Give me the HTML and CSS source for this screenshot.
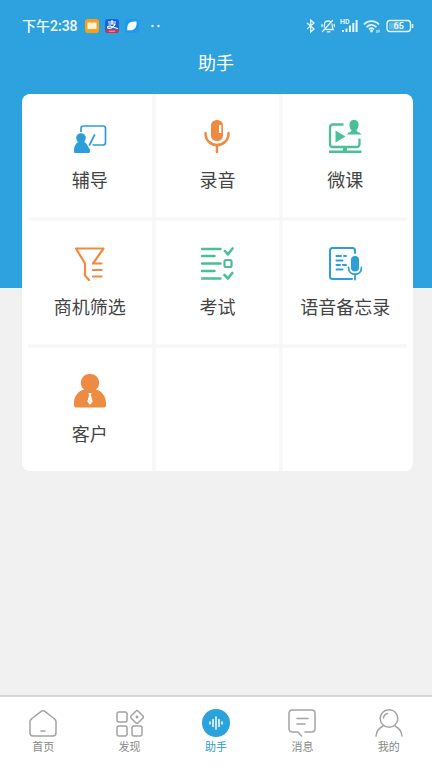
FILE: index.html
```html
<!DOCTYPE html>
<html lang="zh-CN">
<head>
<meta charset="utf-8">
<meta name="viewport" content="width=device-width, initial-scale=1">
<title>助手</title>
<link rel="stylesheet" href="styles.css">
</head>
<body>
<div class="status">
  <time class="clock">下午2:38</time>
  <div class="notices">
    <svg width="14" height="14" viewBox="0 0 14 14"><rect width="14" height="14" rx="3" fill="#f7a01c"/><path d="M2.500 3.500h3.500l1 .6 1-.6h3.500v6.500h-9z" fill="#fff3dc"/></svg>
    <svg width="14" height="14" viewBox="0 0 14 14"><rect width="14" height="14" rx="3" fill="#1765d8"/><path d="M0 10.500h14v.5a3 3 0 0 1-3 3H3a3 3 0 0 1-3-3z" fill="#d9304c"/><path d="M3 3h8M7 1v4M3.500 5h6.500C9 8 6 10 3.500 9.300 1.500 8.500 3 6.500 5.500 7.200L13 9.800" fill="none" stroke="#fff" stroke-width="1.200"/><path d="M4 12.200h6" stroke="#f3a6b2"/></svg>
    <svg width="14" height="14" viewBox="0 0 14 14"><rect width="14" height="14" rx="3" fill="#1b9bf0"/><path d="M3 5.500C4 3 7 2 11.500 2.500c.5 4-1 7.500-4 8.500-2 .6-3.500 0-5 .5C2 9.500 2.200 7.500 3 5.500z" fill="#fff"/></svg>
    <svg class="more" width="10" height="14" viewBox="0 0 10 14" fill="#e9f6fd"><circle cx="1.500" cy="7" r="1.200"/><circle cx="7.500" cy="7" r="1.200"/></svg>
  </div>
  <div class="signals">
    <svg width="10" height="14" viewBox="0 0 10 14" fill="none" stroke="#e6f5fc" stroke-width="1.300"><path d="M1 4l7 6-3.300 3V1L8 4l-7 6"/></svg>
    <svg width="14" height="14" viewBox="0 0 14 14" fill="none" stroke="#e6f5fc" stroke-width="1.300" stroke-linecap="round"><path d="M3.300 8c.3-3-.3-6 3.700-6 1 0 1.700.2 2.200.6M11 5c.3 2.500.2 4 1.200 5.500H5M6.500 12.800h2.500M1.500 12.500l10-11M1 5.500v2M13.300 5.500v2"/></svg>
    <svg class="cell-signal" width="18" height="14" viewBox="0 0 18 14" fill="#e6f5fc"><path d="M2 11h2v2H2zM5.500 9.500h2V13h-2zM9 6.500h2V13H9zM12.300 4h2v9h-2zM15.600 1h2v12h-2z"/><text x="0" y="5">HD</text></svg>
    <svg width="18" height="14" viewBox="0 0 18 14" fill="none" stroke="#e6f5fc" stroke-width="1.700"><path d="M1 5.500c4-4.600 11-4.600 15 0M3.600 8.100c3-3 7-3 9.800 0M6 10.400c1.600-1.500 3.400-1.500 5 0"/><circle cx="8.500" cy="12" r=".6"/><path d="M14 11v3M16 10.500v3" stroke-width="1"/></svg>
    <svg class="battery" width="28" height="14" viewBox="0 0 28 14"><rect x="1" y="1.500" width="23.500" height="11" rx="3" fill="none" stroke="#e6f5fc" stroke-width="1.400"/><rect x="3" y="3.500" width="12" height="7" rx="1" fill="#5db7e7"/><path d="M26.500 5v4" stroke="#e6f5fc" stroke-width="1.500"/><text x="12.700" y="10.300" text-anchor="middle">65</text></svg>
  </div>
</div>
<header class="title-bar"><h1>助手</h1></header>
<main>
  <div class="card">
    <div class="grid">
      <a class="tile" href="#">
        <svg class="icon blue" viewBox="0 0 34 34"><path d="M8 12V8.500Q8 6 10.500 6H30q2.500 0 2.500 2.500v14Q32.500 25 30 25H19.500" fill="none" stroke="currentColor" stroke-width="1.700"/><path d="M21.500 15l-5 10" stroke="currentColor" stroke-width="1.700" stroke-linecap="round"/><circle cx="8" cy="18" r="4.800" fill="currentColor"/><path d="M1 32v-2c0-4 2.500-7.500 5-8.500h4c2 .5 3.500 2 4.500 4l1.500 2.500c1 1 1.200 3 1 4q-.5 1-1.500 1H2q-1 0-1-1z" fill="currentColor"/></svg>
        <span>辅导</span>
      </a>
      <a class="tile" href="#">
        <svg class="icon orange" viewBox="0 0 34 34"><rect x="11" y="0" width="12" height="21" rx="5.500" fill="currentColor"/><rect x="19" y="5" width="2.300" height="8" rx=".5" fill="#fff"/><path d="M5.500 13c0 16 23 16 23 0M17 25v7" fill="none" stroke="currentColor" stroke-width="2.500" stroke-linecap="round"/></svg>
        <span>录音</span>
      </a>
      <a class="tile" href="#">
        <svg class="icon green" viewBox="0 0 34 34"><path d="M15.500 4.500H5Q2 4.500 2 7.500v16.500Q2 27 5 27h23.500q3 0 3-3V18.500" fill="none" stroke="currentColor" stroke-width="2.300"/><path d="M7.500 10.500l10 6-10 6zM15 27.500h4v3h-4zM1 30.500h32.500V33H1z" fill="currentColor"/><path d="M26 0c3.500 0 5 2.500 4.500 5.500-.3 2.500-1.500 4-2 5 0 1.500 3.500 1.500 5 4H19c1-2.500 4.500-2.500 4.500-4-1-1-2-3-2-5C21.300 2 23 0 26 0z" fill="currentColor"/></svg>
        <span>微课</span>
      </a>
      <a class="tile" href="#">
        <svg class="icon orange" viewBox="0 0 34 34" fill="none" stroke="currentColor" stroke-width="2.200" stroke-linecap="round" stroke-linejoin="round"><path d="M16 33l-4-4.500V16.500L3 1.500h27.500L20 16.500h8.500M20 23h8.500M20 29.500h8.500"/></svg>
        <span>商机筛选</span>
      </a>
      <a class="tile" href="#">
        <svg class="icon green" viewBox="0 0 34 34" fill="none" stroke="currentColor" stroke-width="2.400" stroke-linecap="round" stroke-linejoin="round"><path d="M2 2h18.500M2 9h12.500M2 16.500h18.500M2 24h12.500M2 31.500h18.500"/><path d="M25 4l3 3.300L32.500 1.500M24.500 28l3.500 3.500L32.300 26" stroke-width="2.600"/><rect x="24.500" y="13" width="7" height="7" rx="1.500" stroke-width="2.200"/></svg>
        <span>考试</span>
      </a>
      <a class="tile" href="#">
        <svg class="icon blue" viewBox="0 0 34 34" fill="none" stroke="currentColor" stroke-width="2" stroke-linecap="round"><path d="M27 6V3.500Q27 1 24.500 1h-20Q2 1 2 3.500v26Q2 32 4.500 32H24M8.500 9H13M16 9h2M8.500 13.500h6M8.500 18H12M15 18h3M8.500 22.500h6"/><rect x="23" y="9" width="8" height="15.500" rx="4" fill="currentColor" stroke="none"/><path d="M20.500 20.500c0 9 13 9 13 0M27 28v4.500" stroke-width="1.800"/></svg>
        <span>语音备忘录</span>
      </a>
      <a class="tile" href="#">
        <svg class="icon orange" viewBox="0 0 34 34"><path d="M17 0a8.800 8.800 0 0 1 6 15.500c6 1.500 10 7 10 13.500v2.500q0 2-2 2H3q-2 0-2-2V29C1 22.500 5 17 11 15.500A8.800 8.800 0 0 1 17 0z" fill="currentColor"/><path d="M15.500 19h3l-.5 2.500 1.700 6L17 31l-2.700-3.500 1.700-6z" fill="#fff"/></svg>
        <span>客户</span>
      </a>
      <div class="tile"></div>
      <div class="tile"></div>
    </div>
  </div>
</main>
<nav class="tabs">
  <a href="#"><svg viewBox="0 0 28 28"><path d="M3 9.500L12.500 2.200q1.500-1 3 0L25 9.500q2 1.300 2 3V24q0 3-3 3H4q-3 0-3-3V12.500q0-1.700 2-3zM12 22h4"/></svg><span>首页</span></a>
  <a href="#"><svg viewBox="0 0 28 28"><rect x="1" y="3" width="10" height="10" rx="2"/><rect x="1" y="17" width="10" height="10" rx="2"/><rect x="16" y="17" width="10" height="10" rx="2"/><path d="M19.800 2.200q1.200-1.200 2.400 0l4.600 4.600q1.200 1.200 0 2.400l-4.600 4.600q-1.200 1.200-2.400 0l-4.600-4.600q-1.200-1.200 0-2.400z"/><circle cx="21" cy="8" r=".7"/></svg><span>发现</span></a>
  <a class="active" href="#" aria-current="page"><svg viewBox="0 0 28 28"><circle cx="14" cy="14" r="14" fill="#2ca2dc" stroke="none"/><path d="M8 13v2M11 10.500v7M14 8v12M17 10.500v7M20 13v2" stroke="#fff" stroke-width="1.500"/></svg><span>助手</span></a>
  <a href="#"><svg viewBox="0 0 28 28"><path d="M10 23H4.500Q1 23 1 19.500v-15Q1 1 4.500 1h19Q27 1 27 4.500v15q0 3.500-3.500 3.500H17M10 23l3.500 4M9 9.500h11M9 15h8"/></svg><span>消息</span></a>
  <a href="#"><svg viewBox="0 0 28 28"><circle cx="14" cy="9.500" r="8.800"/><path d="M8.500 9c.3-2.500 1.500-4 4-4.500M1 27c.5-4.500 3-8 7-10M27 27c-.5-4.500-3-8-7-10"/></svg><span>我的</span></a>
</nav>
</body>
</html>
```

FILE: styles.css
```css
* { box-sizing: border-box; }

body {
  margin: 0;
  min-height: 100vh;
  display: flex;
  flex-direction: column;
  background: linear-gradient(#2ea2df 288px, #f1f1f1 288px);
  font-family: Roboto, "Noto Sans CJK SC", sans-serif;
}

a { color: inherit; text-decoration: none; }
svg { display: block; }

.status {
  display: flex;
  align-items: center;
  height: 52px;
  padding: 0 18px 0 22px;
  color: #f2faff;
}

.clock { font-size: 14px; font-weight: 500; line-height: 20px; }

.notices { display: flex; gap: 6px; margin-left: 7px; }
.more { margin-left: 6px; }

.signals { display: flex; gap: 5px; margin-left: auto; }
.signals text { font-family: Roboto, sans-serif; font-weight: 700; fill: #e6f5fc; }
.cell-signal text { font-size: 7px; }
.battery text { font-size: 9px; }

.title-bar { height: 42px; text-align: center; color: #fff; }
.title-bar h1 { margin: 0; font-size: 18px; font-weight: 400; line-height: 24px; }

main { flex: 1; padding: 0 19px 24px 22px; }

.card { border-radius: 8px; background: #fff; overflow: hidden; }

.grid {
  display: grid;
  grid-template-columns: repeat(3, 1fr);
  gap: 4px;
  margin: 0 6px;
  background: #f6f6f6;
}

.tile {
  display: flex;
  flex-direction: column;
  align-items: center;
  min-height: 123px;
  padding-top: 26px;
  background: #fff;
  box-shadow: 0 0 3px #fff;
  color: #444;
  font-size: 18px;
  line-height: 24px;
}

.icon { width: 34px; height: 34px; margin-bottom: 15px; }
.blue { color: #2d9fd8; }
.orange { color: #ed8b43; }
.green { color: #4bbf9a; }

.tabs {
  display: grid;
  grid-template-columns: repeat(5, 1fr);
  height: 73px;
  padding-top: 12px;
  border-top: 2px solid #d6d6d6;
  background: #fff;
  color: #888;
  font-size: 11px;
  line-height: 16px;
}

.tabs a { display: flex; flex-direction: column; align-items: center; gap: 3px; }

.tabs svg {
  width: 28px;
  height: 28px;
  fill: none;
  stroke: #a3a3a3;
  stroke-width: 1.5;
  stroke-linecap: round;
  overflow: visible;
}

.tabs .active { color: #2b9cc9; }
```
